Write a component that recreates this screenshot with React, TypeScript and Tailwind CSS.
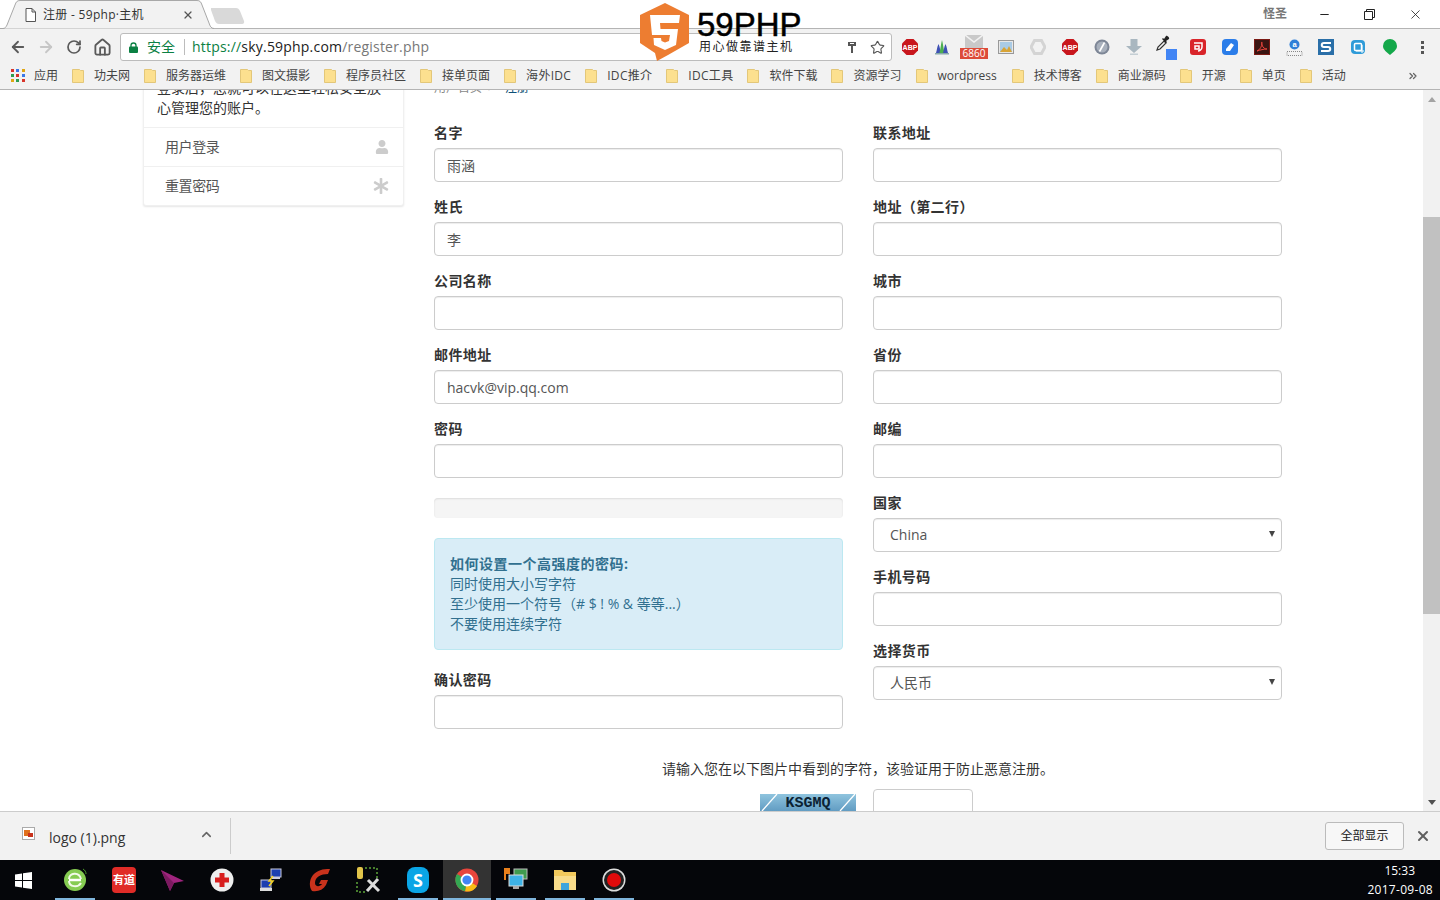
import React from "react";
import { ArrowLeft, ArrowRight, RotateCw, House, Star, ChevronUp, X, Minus, ChevronsRight } from "lucide-react";
import { FaUser, FaAsterisk } from "react-icons/fa";

const bookmarks = ["功夫网","服务器运维","图文摄影","程序员社区","接单页面","海外IDC","IDC推介","IDC工具","软件下载","资源学习","wordpress","技术博客","商业源码","开源","单页","活动"];

function Folder() {
  return (
    <svg width="12" height="14" viewBox="0 0 12 14" className="shrink-0">
      <path d="M.5.5h7l1 1h3v12H.5z" fill="#fce08f" stroke="#e3c779" />
    </svg>
  );
}

function Field({ label, value }: { label: string; value?: string }) {
  return (
    <div className="mb-[15px]">
      <label className="block h-5 mb-[5px] text-sm leading-5 font-bold tracking-[0.4px] text-[#333]">{label}</label>
      <input readOnly value={value ?? ""} className="block w-full h-[34px] px-3 border border-[#ccc] rounded bg-white text-sm text-[#555] shadow-[inset_0_1px_1px_rgba(0,0,0,0.075)]" />
    </div>
  );
}

function SelectField({ label, value }: { label: string; value: string }) {
  return (
    <div className="mb-[15px]">
      <label className="block h-5 mb-[5px] text-sm leading-5 font-bold tracking-[0.4px] text-[#333]">{label}</label>
      <div className="relative">
        <select className="block w-full h-[34px] pl-4 pr-6 border border-[#ccc] rounded bg-white text-sm text-[#555] appearance-none shadow-[inset_0_1px_1px_rgba(0,0,0,0.075)]">
          <option>{value}</option>
        </select>
        <svg width="6" height="6" viewBox="0 0 6 6" className="absolute right-[7px] top-[13px]"><path d="M0 0h6L3 6z" fill="#444" /></svg>
      </div>
    </div>
  );
}

function Abp() {
  return (
    <svg width="18" height="18" viewBox="0 0 18 18">
      <path d="M5.500 1h7L17 5.500v7L12.500 17h-7L1 12.500v-7z" fill="#c8161d" />
      <text x="9" y="11.500" textAnchor="middle" fontSize="7" fontWeight="700" fill="#fff" fontFamily="Liberation Sans, sans-serif">ABP</text>
    </svg>
  );
}

const extensions: React.ReactNode[] = [
  <Abp />,
  <svg width="16" height="16" viewBox="0 0 16 16"><path d="M1 14h14v1.500H1z" fill="#8aa" /><path d="M2 14c1-3 1-6 2.500-9C6 8 6 11 7 14z" fill="#3f51b5" /><path d="M5.500 14c1-5 1.500-9 2.500-13 1 4 1.500 8 2.500 13z" fill="#4caf50" /><path d="M9 14c1-3 1-6 2.500-9 1.500 3 1.500 6 2.500 9z" fill="#3f51b5" /></svg>,
  <div className="relative w-7 h-6">
    <svg width="18" height="13" viewBox="0 0 18 13" className="absolute left-[5px] top-0"><rect width="18" height="13" fill="#c9c9c9" /><path d="M0 0l9 7 9-7" fill="none" stroke="#f2f2f2" strokeWidth="1.500" /></svg>
    <span className="absolute left-0 bottom-0 w-7 h-[11px] bg-[#dd4b39] text-white text-[10px] leading-[11px] text-center">6860</span>
  </div>,
  <svg width="16" height="14" viewBox="0 0 16 14"><rect x=".5" y=".5" width="15" height="13" fill="#e8e8e8" stroke="#999" /><rect x="2" y="2" width="12" height="10" fill="#a9cbe6" /><path d="M2 12l4-5 3 3 2-4 3 6z" fill="#d8a436" /></svg>,
  <svg width="16" height="16" viewBox="0 0 16 16"><path d="M4.500 1.500h7L15 8l-3.500 6.500h-7L1 8z" fill="none" stroke="#d4d4d4" strokeWidth="3" /></svg>,
  <Abp />,
  <svg width="16" height="16" viewBox="0 0 16 16"><circle cx="8" cy="8" r="7.500" fill="#7d8696" /><circle cx="8" cy="8" r="5.500" fill="#a8b0bc" /><path d="M5.500 12.500L10.500 3.500" stroke="#fff" strokeWidth="1.600" /></svg>,
  <svg width="18" height="18" viewBox="0 0 18 18"><path d="M5.500 1h7v7H17l-8 7-8-7h4.500z" fill="#a9b7c0" /><path d="M5 15.500h8V17H5z" fill="#c4ced4" /></svg>,
  <div className="relative w-5 h-5">
    <svg width="16" height="16" viewBox="0 0 16 16" className="absolute left-0 top-[-2px]"><path d="M1 15l1-3 6-6 2 2-6 6z" fill="none" stroke="#333" strokeWidth="1.200" /><path d="M8 4l2-3c1-1 4 2 3 3l-3 2 1 1-1 1-4-4 1-1z" fill="#222" /></svg>
    <span className="absolute right-[-1px] bottom-[-3px] w-[11px] h-[11px] bg-[#4285f4]" />
  </div>,
  <div className="w-4 h-4 rounded-[3px] bg-[#d9252a] flex items-center justify-center"><svg width="12" height="12" viewBox="0 0 12 12"><path d="M2 2h8v4c0 3-3 4-4 4M3 5h4v3H3z" fill="none" stroke="#fff" strokeWidth="1.500" /></svg></div>,
  <div className="w-4 h-4 rounded-[4px] bg-[#2b7de9] flex items-center justify-center"><svg width="10" height="10" viewBox="0 0 10 10"><path d="M1 7l5-6 3 2-4 6H1z" fill="#fff" /></svg></div>,
  <div className="w-4 h-4 bg-[#3a1512] border border-[#7a1a14] flex items-center justify-center"><svg width="12" height="12" viewBox="0 0 12 12"><path d="M1 10c3-1 5-5 5-8 0-2-1-1 0 2 1 3 3 4 5 4-3 0-7 1-10 2z" fill="none" stroke="#e8453c" strokeWidth="1" /></svg></div>,
  <svg width="17" height="17" viewBox="0 0 17 17"><circle cx="8.500" cy="5.500" r="5" fill="#2f7fd8" /><text x="8.500" y="8" textAnchor="middle" fontSize="7.500" fill="#fff" fontWeight="700" fontFamily="Liberation Sans, sans-serif">a</text><path d="M1 12.500h15v4H1z" fill="none" stroke="#888" strokeDasharray="1 1" /></svg>,
  <div className="w-4 h-4 bg-[#2a6fa8] flex items-center justify-center"><svg width="14" height="14" viewBox="0 0 14 14"><path d="M12 3H5C2 3 2 7 5 7h4c3 0 3 4 0 4H2" fill="none" stroke="#fff" strokeWidth="2" /></svg></div>,
  <svg width="16" height="16" viewBox="0 0 16 16"><rect x="1" y="1" width="14" height="14" rx="4" fill="#2f9bd8" /><rect x="4.500" y="4.500" width="7" height="7" rx="1" fill="none" stroke="#fff" strokeWidth="1.500" /><path d="M6 12h8M12 6v8" stroke="#fff" strokeWidth="1" /></svg>,
  <svg width="16" height="18" viewBox="0 0 16 18"><path d="M8 1a7 7 0 0 1 7 7c0 4-4 6-7 9-3-3-7-5-7-9a7 7 0 0 1 7-7z" fill="#14a84a" /></svg>,
  <div className="flex flex-col gap-[2px]"><span className="w-[3px] h-[3px] bg-[#555]" /><span className="w-[3px] h-[3px] bg-[#555]" /><span className="w-[3px] h-[3px] bg-[#555]" /></div>,
];

const taskIcons: { node: React.ReactNode; on?: boolean; active?: boolean }[] = [
  { on: true, node: <svg width="24" height="26" viewBox="0 0 24 26"><circle cx="12" cy="13" r="11" fill="#86cc52" /><path d="M6 13h12" stroke="#fff" strokeWidth="2.500" /><path d="M6 12c0-6 10-8 12 0M6 14c0 6 9 7 12 2" stroke="#f2fae8" strokeWidth="2" fill="none" /><path d="M20 2c2 1 3 3 3 5" stroke="#4c9a2a" fill="none" /></svg> },
  { node: <div className="w-6 h-[26px] rounded bg-[#e02b27] text-white text-[11px] font-bold leading-[26px] text-center">有道</div> },
  { node: <svg width="24" height="24" viewBox="0 0 24 24"><path d="M0 2l23 11-10 2-4 8z" fill="#a0247e" /><path d="M0 2l13 13-4 8z" fill="#7c1a60" /></svg> },
  { node: <svg width="24" height="24" viewBox="0 0 24 24"><circle cx="12" cy="12" r="11.500" fill="#eee" /><path d="M9.500 5h5v4.500H19v5h-4.500V19h-5v-4.500H5v-5h4.500z" fill="#d81e1e" /></svg> },
  { node: <svg width="24" height="26" viewBox="0 0 24 26"><rect x="12" y="2" width="10" height="8" fill="#1c3fb0" stroke="#ccd" /><rect x="13" y="10" width="8" height="2" fill="#ccd" /><rect x="2" y="13" width="10" height="8" fill="#1c3fb0" stroke="#ccd" /><rect x="1" y="21" width="12" height="3" fill="#ddd" /><path d="M14 9l-4 5h4l-4 5" fill="none" stroke="#f5d327" strokeWidth="1.500" /></svg> },
  { node: <svg width="24" height="26" viewBox="0 0 24 26"><path d="M22 2c-8 0-12 1-17 6C1 13 1 20 4 24c6 1 11-1 14-6l2-5h-7l-2 4h3c-2 3-7 3-7-1 0-6 6-9 13-9z" fill="#c8321c" /></svg> },
  { node: <svg width="26" height="28" viewBox="0 0 26 28"><rect x="1" y="1" width="6" height="12" rx="2" fill="#e2c44a" /><path d="M9 2h12v10M1 16v10h10" stroke="#5da53a" strokeWidth="1.500" strokeDasharray="2 2" fill="none" /><path d="M11 25L22 13M12 14l11 11" stroke="#ddd" strokeWidth="3" /></svg> },
  { on: true, node: <div className="w-[22px] h-[26px] rounded-[8px] bg-[#0aa5e6] text-white text-lg font-bold leading-[26px] text-center">S</div> },
  { on: true, active: true, node: <svg width="24" height="24" viewBox="0 0 24 24"><circle cx="12" cy="12" r="11.500" fill="#e8453c" /><path d="M12 12L22 18A11.500 11.500 0 0 1 10 23.300z" fill="#f9bc15" /><path d="M12 12L10 23.300A11.500 11.500 0 0 1 2 6z" fill="#34a853" /><circle cx="12" cy="12" r="5.500" fill="#4285f4" stroke="#fff" strokeWidth="1.800" /></svg> },
  { on: true, node: <svg width="26" height="26" viewBox="0 0 26 26"><rect x="11" y="2" width="13" height="10" fill="#3f9b4f" stroke="#bbb" /><rect x="6" y="8" width="14" height="11" fill="#3db2e6" stroke="#ddd" /><rect x="10" y="19" width="6" height="3" fill="#aaa" /><path d="M1 1h6v6H3v6H1z" fill="#e8801c" /></svg> },
  { on: true, node: <svg width="24" height="22" viewBox="0 0 24 22"><path d="M1 1h8l2 2h12v18H1z" fill="#f2c95c" /><path d="M1 7h22v14H1z" fill="#f8dc8a" /><path d="M8 21v-7h8v7z" fill="#3fa5dc" /></svg> },
  { on: true, node: <svg width="24" height="24" viewBox="0 0 24 24"><circle cx="12" cy="12" r="11.500" fill="#ddd" /><circle cx="12" cy="12" r="10" fill="#222" /><circle cx="12" cy="12" r="7" fill="#e00b0b" /></svg> },
];

export default function App() {
  return (
    <div className="w-[1440px] h-[900px] flex flex-col overflow-hidden relative bg-white text-[#333] font-['Open_Sans','Noto_Sans_CJK_SC',sans-serif]">
      {/* tab strip */}
      <div className="h-[29px] shrink-0 flex border-b border-[#b4b4b4] bg-white">
        <div className="relative w-[214px] h-[29px] flex items-center pl-[25px] pr-[20px] text-xs text-[#333]">
          <svg width="214" height="29" viewBox="0 0 214 29" className="absolute left-0 top-0">
            <path d="M0 28.500H3C5 28.500 6 27 7 25L15 5C16 2 17 .5 20 .5H197C200 .5 201 2 202 5L209 23C210 26 211 28.500 214 28.500" fill="#f2f2f2" stroke="#a8a8a8" />
          </svg>
          <svg width="11" height="14" viewBox="0 0 11 14" className="relative shrink-0"><path d="M1 .5h6l3.500 3.500v9.500H1zM7 .5V4h3.500" fill="#fff" stroke="#555" /></svg>
          <span className="relative ml-[7px] flex-1 whitespace-nowrap tracking-[0.3px]">注册 - 59php·主机</span>
          <X size={12} strokeWidth={2.500} className="relative text-[#555] -ml-1" />
        </div>
        <svg width="36" height="18" viewBox="0 0 36 18" className="mt-[7px] -ml-[4px]"><path d="M1 1h25c2 0 3 1 4 3l4 10c.5 1.500 0 3-2 3H9c-2 0-3-1-4-3L1 3z" fill="#d9d9d9" /></svg>
        <div className="flex-1 flex justify-end items-start pt-[5px] pr-[2px]">
          <span className="mr-[15px] mt-[1px] text-xs leading-4 font-bold text-[#777]">怪圣</span>
          <span className="w-[45px] h-[18px] flex items-center justify-center text-[#222]"><Minus size={13} /></span>
          <span className="w-[45px] h-[18px] flex items-center justify-center"><svg width="11" height="11" viewBox="0 0 11 11"><path d="M.5 2.500h8v8h-8zM2.500 2.500v-2h8v8h-2" fill="none" stroke="#222" /></svg></span>
          <span className="w-[46px] h-[18px] flex items-center justify-center text-[#222]"><X size={15} strokeWidth={1.300} /></span>
        </div>
      </div>

      {/* toolbar */}
      <div className="h-[33px] shrink-0 bg-[#f2f2f2] flex items-center pl-[9px] pt-[3px]">
        <ArrowLeft size={18} strokeWidth={2.400} className="text-[#5a5a5a]" />
        <ArrowRight size={18} strokeWidth={2.400} className="ml-[10px] text-[#c6c6c6]" />
        <RotateCw size={16} strokeWidth={2.600} className="ml-[11px] text-[#5a5a5a]" />
        <House size={19} strokeWidth={2.300} className="ml-[11px] text-[#5a5a5a]" />
        <div className="ml-[8px] w-[772px] h-[28px] bg-white border border-[#bcbcbc] rounded-[3px] flex items-center pl-[8px] pr-[6px]">
          <svg width="9" height="11" viewBox="0 0 9 11" className="shrink-0"><path d="M2 5V3.500a2.500 2.500 0 0 1 5 0V5" fill="none" stroke="#0b8043" strokeWidth="1.300" /><rect y="4.500" width="9" height="6.500" rx="1" fill="#0b8043" /></svg>
          <span className="ml-[9px] text-sm text-[#0b8043]">安全</span>
          <span className="ml-[9px] w-px h-[16px] bg-[#bcbcbc]" />
          <span className="ml-[7px] flex-1 text-sm tracking-[0.2px] whitespace-nowrap"><span className="text-[#0b8043]">https://</span><span className="text-[#222]">sky.59php.com</span><span className="text-[#777]">/register.php</span></span>
          <svg width="10" height="13" viewBox="0 0 10 13" className="mr-[13px]"><path d="M1 1h8v4H6v7H4V5H1z" fill="#555" /><rect x="3" y="2" width="4" height="1" fill="#fff" /></svg>
          <Star size={15} strokeWidth={1.800} className="text-[#555]" />
        </div>
        <div className="ml-[2px] flex items-center">
          {extensions.map((e, i) => (
            <div key={i} className="w-8 h-7 flex items-center justify-center">{e}</div>
          ))}
        </div>
      </div>

      {/* bookmarks */}
      <div className="h-[28px] shrink-0 bg-[#f2f2f2] border-b border-[#b4b4b4] flex items-center pl-[11px] pr-[21px] text-xs text-[#444]">
        <div className="w-[14px] h-[14px] grid grid-cols-3 gap-[2px] shrink-0">
          {["#d8342a","#3b78e7","#e0a612","#2e9e4f","#d8342a","#3b78e7","#e0a612","#2e9e4f","#d8342a"].map((c, i) => (
            <span key={i} className="w-[3px] h-[3px]" style={{ background: c }} />
          ))}
        </div>
        <span className="ml-[9px] mr-[14px]">应用</span>
        <div className="flex items-center gap-[14px]">
          {bookmarks.map((b) => (
            <div key={b} className={`flex items-center gap-[10px] whitespace-nowrap ${b.includes("IDC") ? "tracking-[0.3px]" : b === "wordpress" ? "mr-px" : ""}`}><Folder /><span>{b}</span></div>
          ))}
        </div>
        <ChevronsRight size={12} strokeWidth={2.500} className="ml-auto text-[#666]" />
      </div>

      {/* page */}
      <div className="flex-1 min-h-0 flex overflow-hidden">
        <div className="flex-1 min-w-0 flex items-start overflow-hidden pl-[143px]">
          <aside className="w-[261px] shrink-0 -mt-[13px] bg-white border border-[#f0f0f0] rounded-b-[3px] shadow-[0_1px_2px_rgba(0,0,0,0.1)]">
            <div className="pl-[13px] pr-[10px] pb-[9px] text-sm leading-5 text-[#333]">登录后，您就可以在这里轻松安全放心管理您的账户。</div>
            <div className="h-[39px] border-t border-[#f0f0f0] pl-[21px] pr-[14px] flex items-center justify-between text-sm tracking-[-0.4px] text-[#555]">用户登录<FaUser size={14} className="text-[#ccc]" /></div>
            <div className="h-[39px] border-t border-[#f0f0f0] pl-[21px] pr-[14px] flex items-center justify-between text-sm tracking-[-0.4px] text-[#555]">重置密码<FaAsterisk size={16} className="text-[#ccc]" /></div>
          </aside>
          <main className="ml-[30px] w-[848px] shrink-0 -mt-[12px]">
            <div className="h-5 mb-[25px] text-xs leading-5 text-[#888]">用户首页<span className="mx-[6px]">&gt;</span><span className="ml-[4px] text-[#0e5077]">注册</span></div>
            <div className="grid grid-cols-2 gap-x-[30px] items-start">
              <div>
                <Field label="名字" value="雨涵" />
                <Field label="姓氏" value="李" />
                <Field label="公司名称" />
                <Field label="邮件地址" value="hacvk@vip.qq.com" />
                <Field label="密码" />
                <div className="h-5 mt-5 mb-5 bg-[#f5f5f5] rounded shadow-[inset_0_1px_2px_rgba(0,0,0,0.1)]" />
                <div className="h-[112px] mb-5 p-[15px] bg-[#d9edf7] border border-[#bce8f1] rounded text-sm leading-5 text-[#31708f]">
                  <strong className="font-bold tracking-[0.5px]">如何设置一个高强度的密码:</strong><br />
                  同时使用大小写字符<br />
                  至少使用一个符号（# $ ! % &amp; 等等...）<br />
                  不要使用连续字符
                </div>
                <Field label="确认密码" />
              </div>
              <div>
                <Field label="联系地址" />
                <Field label="地址（第二行）" />
                <Field label="城市" />
                <Field label="省份" />
                <Field label="邮编" />
                <SelectField label="国家" value="China" />
                <Field label="手机号码" />
                <SelectField label="选择货币" value="人民币" />
              </div>
            </div>
            <p className="mt-[15px] text-center text-sm leading-5 text-[#333]">请输入您在以下图片中看到的字符，该验证用于防止恶意注册。</p>
            <div className="mt-[10px] flex items-start pl-[326px]">
              <div className="relative w-[96px] h-[30px] mt-[5px] overflow-hidden bg-gradient-to-b from-[#8fc4de] to-[#3f7fae] text-center text-[15px] leading-[20px] font-bold font-['Liberation_Mono',monospace] text-[#0b2233]">
                <svg width="96" height="30" viewBox="0 0 96 30" className="absolute left-0 top-0"><path d="M2 17L17 0M80 17L95 0" stroke="#fff" strokeWidth="1.300" /></svg>
                <span className="relative">KSGMQ</span>
              </div>
              <input readOnly className="ml-[17px] w-[100px] h-[34px] border border-[#ccc] rounded bg-white" />
            </div>
          </main>
        </div>
        {/* scrollbar */}
        <div className="w-[17px] shrink-0 bg-[#f1f1f1] flex flex-col items-center">
          <svg width="8" height="5" viewBox="0 0 8 5" className="mt-[7px] shrink-0"><path d="M4 0l4 5H0z" fill="#a3a3a3" /></svg>
          <div className="mt-[115px] w-full h-[397px] shrink-0 bg-[#c1c1c1]" />
          <svg width="8" height="5" viewBox="0 0 8 5" className="mt-auto mb-[6px] shrink-0"><path d="M0 0h8L4 5z" fill="#505050" /></svg>
        </div>
      </div>

      {/* download bar */}
      <div className="h-[49px] shrink-0 bg-[#f2f2f2] border-t border-[#ccc] flex items-center pl-[22px] pr-[9px]">
        <svg width="13" height="13" viewBox="0 0 13 13" className="-mt-[6px]"><rect x=".5" y=".5" width="12" height="12" fill="#fff" stroke="#aaa" /><rect x="2" y="3" width="6" height="6" fill="#e0701c" /><rect x="6" y="6" width="5" height="4" fill="#c8321c" /></svg>
        <span className="ml-[14px] mt-[4px] w-[150px] text-sm text-[#333]">logo (1).png</span>
        <ChevronUp size={15} strokeWidth={2.500} className="text-[#666] -mt-[4px]" />
        <span className="ml-[16px] w-px h-[36px] bg-[#ccc]" />
        <button className="ml-auto w-[79px] h-[28px] bg-[#f7f7f7] border border-[#bbb] rounded-[3px] text-xs text-[#222]">全部显示</button>
        <X size={16} strokeWidth={3} className="ml-[11px] text-[#5f5f5f]" />
      </div>

      {/* taskbar */}
      <div className="h-[40px] shrink-0 bg-[#05060a] flex items-stretch">
        <div className="w-[51px] flex items-center justify-center pr-[5px]">
          <svg width="17" height="17" viewBox="0 0 17 17"><path d="M0 2.500L7 1.500v6.500H0zM8 1.300L17 0v8H8zM0 9h7v6.500L0 14.500zM8 9h9v8L8 15.700z" fill="#fff" /></svg>
        </div>
        {taskIcons.map((t, i) => (
          <div key={i} className={`relative w-[48px] mr-px flex items-center justify-center ${t.active ? "bg-[#333]" : ""}`}>
            {t.node}
            {t.on && <span className={`absolute bottom-0 h-[2px] bg-[#7fb5dc] ${t.active ? "inset-x-0" : "inset-x-[4px]"}`} />}
          </div>
        ))}
        <div className="ml-auto pr-[7px] pt-[2px] flex flex-col items-end text-xs leading-[18px] text-white">
          <span className="pr-[18px]">15:33</span>
          <span className="mt-px tracking-[0.3px]">2017-09-08</span>
        </div>
      </div>

      {/* site logo pasted over the browser window */}
      <div className="absolute left-[640px] top-[3px] flex pointer-events-none">
        <svg width="50" height="58" viewBox="0 0 50 58" className="shrink-0">
          <path d="M25 0L49 12V40L28 52L17 58L15 50L0 40V12z" fill="#ed7d31" />
          <path d="M10 12H40L39 20H20L20.500 26H38L36 42L25 47L14 42L13.500 35H21L21.500 38L25 39.500L29 38L30 32H12z" fill="#fff" />
        </svg>
        <div className="ml-[7px] text-black">
          <div className="h-[36px] pt-[4px] text-[33px] leading-[36px] font-['Liberation_Sans',sans-serif] [-webkit-text-stroke:0.5px_black]">59PHP</div>
          <div className="ml-[2px] text-xs leading-4 tracking-[1.500px] text-[#222] whitespace-nowrap">用心做靠谱主机</div>
        </div>
      </div>
    </div>
  );
}
